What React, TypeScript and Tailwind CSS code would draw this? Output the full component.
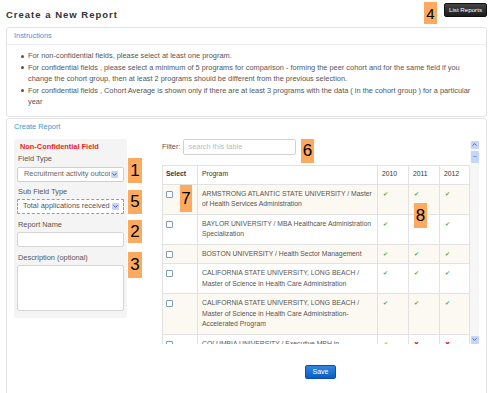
import { ChevronDown, ChevronUp } from "lucide-react";

const bullets = [
  ["For non-confidential fields, please select at least one program."],
  [
    "For confidential fields , please select a minimum of 5 programs for comparison - forming the peer cohort and for the same field if you",
    "change the cohort group, then at least 2 programs should be different from the previous selection.",
  ],
  [
    "For confidential fields , Cohort Average is shown only if there are at least 3 programs with the data ( in the cohort group ) for a particular",
    "year",
  ],
];

const programs = [
  { lines: ["ARMSTRONG ATLANTIC STATE UNIVERSITY / Master", "of Health Services Administration"], marks: [1, 1, 1] },
  { lines: ["BAYLOR UNIVERSITY / MBA Healthcare Administration", "Specialization"], marks: [1, 1, 1] },
  { lines: ["BOSTON UNIVERSITY / Health Sector Management"], marks: [1, 1, 1] },
  { lines: ["CALIFORNIA STATE UNIVERSITY, LONG BEACH /", "Master of Science in Health Care Administration"], marks: [1, 1, 1] },
  {
    lines: ["CALIFORNIA STATE UNIVERSITY, LONG BEACH /", "Master of Science in Health Care Administration-", "Accelerated Program"],
    marks: [1, 1, 1],
  },
  { lines: ["COLUMBIA UNIVERSITY / Executive MPH in", "Health Policy and Management"], marks: [1, 0, 0] },
];

function Tag({ n, className }: { n: string; className: string }) {
  return (
    <div className={`absolute bg-[#fbaa5f] flex items-center justify-center text-black text-[17px] leading-none ${className}`}>
      {n}
    </div>
  );
}

function DropArrow() {
  return (
    <span className="w-[7px] h-[7px] bg-[#c3d4f6] rounded-[1px] flex items-center justify-center flex-shrink-0">
      <ChevronDown size={7} strokeWidth={3} className="text-[#2e4f9c]" />
    </span>
  );
}

export default function App() {
  return (
    <div className="w-[500px] h-[393px] overflow-hidden bg-white font-['Liberation_Sans',Arial,sans-serif] text-[#555]">
      {/* title row */}
      <div className="h-[27px] flex items-start justify-between pl-[6px] pr-[13px]">
        <h1 className="mt-[9px] text-[9.5px] leading-[12px] font-bold tracking-[1px] text-[#333]">Create a New Report</h1>
        <div className="flex items-start gap-[7px] pt-[2px]">
          <div className="w-[13px] h-[22px] bg-[#fbaa5f] flex items-center justify-center text-black text-[15px] leading-none">4</div>
          <button className="mt-[1px] w-[43px] h-[14px] rounded-[2px] bg-gradient-to-b from-[#444] to-[#1c1c1c] border border-[#111] text-white text-[6.2px] leading-none">
            List Reports
          </button>
        </div>
      </div>

      {/* instructions */}
      <div className="mx-[6px] w-[481px] border border-[#e3e3e3] rounded-[3px]">
        <div className="h-[17px] border-b border-[#ececec] px-[7px] flex items-center text-[7.4px] text-[#3b97d6]">Instructions</div>
        <ul className="pl-[14px] pt-[5px] pb-[8px] text-[7.4px] leading-[11.5px]">
          {bullets.map((b, i) => (
            <li key={i} className="flex items-start">
              <span className="w-[3px] h-[3px] rounded-full bg-[#555] mt-[4.5px] mr-[4px] flex-shrink-0" />
              <span className="whitespace-nowrap">
                {b.map((l, j) => (
                  <div key={j}>{l}</div>
                ))}
              </span>
            </li>
          ))}
        </ul>
      </div>

      {/* create report */}
      <div className="mt-[1px] mx-[6px] w-[481px] h-[300px] border border-[#e3e3e3] rounded-[3px]">
        <div className="h-[16px] px-[7px] flex items-center text-[7.4px] text-[#3b97d6]">Create Report</div>
        <div className="flex items-start pl-[7px] pt-[4px]">
          {/* form */}
          <div className="relative w-[113px] bg-[#f4f4f4] rounded-[3px] px-[3px] pt-[3px] pb-[7px] text-[7.4px] leading-[10px]">
            <div className="ml-[3px] font-bold text-[#ee1c1c]">Non-Confidential Field</div>
            <div className="mt-[2px] ml-[1px]">Field Type</div>
            <div className="mt-[3px] h-[15px] bg-white border border-[#d0d0d0] rounded-[2px] flex items-center pl-[6px] pr-[5px] gap-[1px]">
              <span className="flex-1 overflow-hidden whitespace-nowrap text-[#666]">Recruitment activity outcomes</span>
              <DropArrow />
            </div>
            <div className="mt-[5px] ml-[1px]">Sub Field Type</div>
            <div className="mt-[2px] h-[15px] bg-white border border-dashed border-[#999] rounded-[1px] flex items-center pl-[5px] pr-[4px] gap-[1px]">
              <span className="flex-1 overflow-hidden whitespace-nowrap text-[#555]">Total applications received</span>
              <DropArrow />
            </div>
            <div className="mt-[6px] ml-[1px]">Report Name</div>
            <div className="mt-[2px] h-[15px] bg-white border border-[#d6d6d6] rounded-[2px]" />
            <div className="mt-[6px] ml-[1px]">Description (optional)</div>
            <div className="mt-[2px] h-[46px] bg-white border border-[#d6d6d6] rounded-[2px]" />

            <Tag n="1" className="left-[114px] top-[19px] w-[14px] h-[25px]" />
            <Tag n="5" className="left-[114px] top-[51px] w-[14px] h-[24px]" />
            <Tag n="2" className="left-[114px] top-[81px] w-[14px] h-[23px]" />
            <Tag n="3" className="left-[114px] top-[113px] w-[14px] h-[26px]" />
          </div>

          {/* programs */}
          <div className="ml-[35px] flex flex-col">
            <div className="flex items-start">
              <div className="w-[308px] h-[205px] overflow-hidden">
                <div className="relative h-[16px] flex items-center gap-[3px] text-[7.4px]">
                  <span>Filter:</span>
                  <div className="w-[113px] h-[16px] border border-[#d2d2d2] rounded-[2px] flex items-center pl-[4px] text-[#bbb]">
                    search this table
                  </div>
                  <Tag n="6" className="left-[139px] -top-[1px] w-[13px] h-[25px]" />
                </div>
                <div className="relative mt-[10px]">
                  <table className="table-fixed border-collapse w-[307px] text-[6.8px] leading-[10.5px]">
                    <colgroup>
                      <col className="w-[35px]" />
                      <col className="w-[180px]" />
                      <col className="w-[31px]" />
                      <col className="w-[31px]" />
                      <col className="w-[30px]" />
                    </colgroup>
                    <thead>
                      <tr className="h-[19px] text-[#333]">
                        <th className="border border-[#e2e2e2] text-left font-bold pl-[3px]">Select</th>
                        <th className="border border-[#e2e2e2] text-left font-normal pl-[4px]">Program</th>
                        <th className="border border-[#e2e2e2] text-left font-normal pl-[4px]">2010</th>
                        <th className="border border-[#e2e2e2] text-left font-normal pl-[4px]">2011</th>
                        <th className="border border-[#e2e2e2] text-left font-normal pl-[4px]">2012</th>
                      </tr>
                    </thead>
                    <tbody>
                      {programs.map((p, i) => (
                        <tr key={i} className={i % 2 === 0 ? "bg-[#fcf9f2]" : "bg-white"}>
                          <td className="border border-[#e2e2e2] align-top pl-[3px] pt-[4px] pb-[4px]">
                            <div className="mt-[2px] w-[7px] h-[7px] border border-[#7f9db9] bg-white rounded-[1px]" />
                          </td>
                          <td className="border border-[#e2e2e2] align-top pl-[4px] pt-[4px] pb-[4px] whitespace-nowrap overflow-hidden">
                            {p.lines.map((l, j) => (
                              <div key={j}>{l}</div>
                            ))}
                          </td>
                          {p.marks.map((m, j) => (
                            <td key={j} className="border border-[#e2e2e2] align-top pl-[5px] pt-[4px] pb-[4px]">
                              {m ? (
                                <span className="font-['DejaVu_Sans'] text-[6px] text-[#4fae3f]">✔</span>
                              ) : (
                                <span className="font-['DejaVu_Sans'] text-[6px] text-[#e81818]">✖</span>
                              )}
                            </td>
                          ))}
                        </tr>
                      ))}
                    </tbody>
                  </table>
                  <Tag n="7" className="left-[18px] top-[20px] w-[12px] h-[27px]" />
                  <Tag n="8" className="left-[252px] top-[38px] w-[13px] h-[25px]" />
                </div>
              </div>

              {/* scrollbar */}
              <div className="mt-[2px] w-[9px] h-[203px] bg-[#f6f6f6] flex flex-col items-center">
                <div className="w-[8px] h-[8px] bg-[#c6d6f7] rounded-[1px] flex items-center justify-center">
                  <ChevronUp size={7} strokeWidth={3} className="text-[#3a5ba8]" />
                </div>
                <div className="mt-[2px] w-[8px] h-[12px] bg-[#c6d6f7] rounded-[1px] flex items-center justify-center">
                  <span className="w-[4px] h-px bg-[#8aa4dc]" />
                </div>
                <div className="flex-1" />
                <div className="w-[8px] h-[8px] bg-[#c6d6f7] rounded-[1px] flex items-center justify-center">
                  <ChevronDown size={7} strokeWidth={3} className="text-[#3a5ba8]" />
                </div>
              </div>
            </div>

            <div className="mt-[21px] flex justify-center">
              <button className="w-[31px] h-[14px] rounded-[2px] bg-gradient-to-b from-[#2f86e0] to-[#0a5cc4] border border-[#0a4fae] text-white text-[7px] leading-none">
                Save
              </button>
            </div>
          </div>
        </div>
      </div>
    </div>
  );
}
